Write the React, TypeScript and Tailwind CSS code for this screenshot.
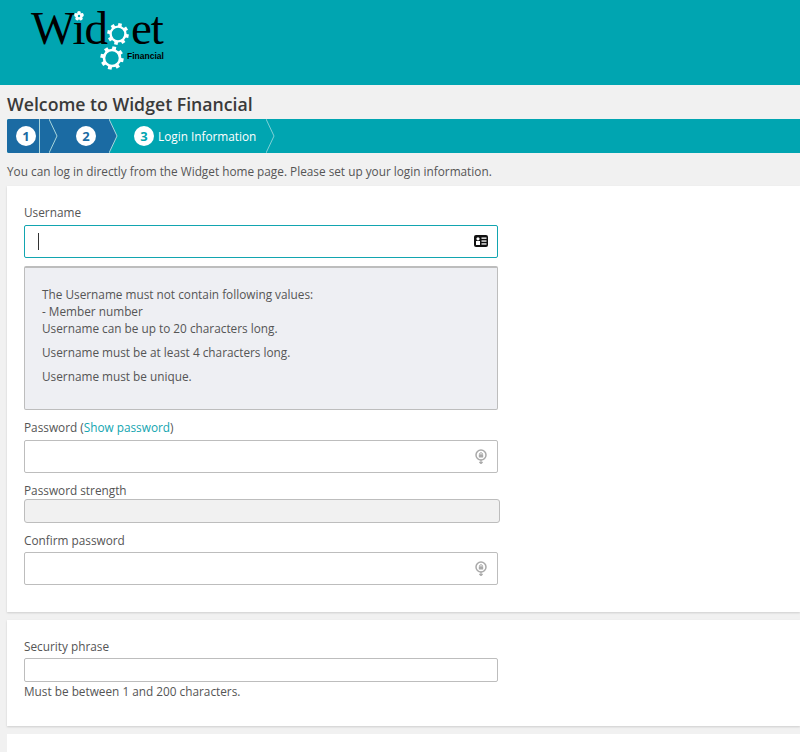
const teal = '#00a5b1'

function Gear({ size, className }: { size: number; className?: string }) {
  const teeth = [0, 45, 90, 135, 180, 225, 270, 315]
  return (
    <svg width={size} height={size} viewBox="0 0 24 24" className={className}>
      <circle cx="12" cy="12" r="7.4" fill="none" stroke="#fff" strokeWidth="2.4" />
      {teeth.map((a) => (
        <rect key={a} x="10.2" y="1.2" width="3.6" height="3.6" fill="#fff" transform={`rotate(${a + 12} 12 12)`} />
      ))}
    </svg>
  )
}

function Flower({ className }: { className?: string }) {
  return (
    <svg width="10" height="10" viewBox="0 0 10 10" className={className}>
      <rect width="10" height="10" fill={teal} />
      {[0, 72, 144, 216, 288].map((a) => (
        <circle key={a} cx="5" cy="2" r="1.9" fill="#fff" transform={`rotate(${a} 5 5)`} />
      ))}
      <circle cx="5" cy="5" r="2.6" fill="#fff" />
      <circle cx="5" cy="5" r="1.2" fill={teal} />
    </svg>
  )
}

function Logo() {
  return (
    <div className="relative w-[136px] h-[72px] ml-[31px] mt-[9px] font-['Liberation_Serif',serif] text-black">
      <div className="absolute left-0 top-[-1px] text-[47px] leading-[40px] tracking-[-1px]">Wid</div>
      <div className="absolute left-[100px] top-[-1px] text-[47px] leading-[40px] tracking-[-1px]">et</div>
      <Flower className="absolute left-[43px] top-[2px]" />
      <Gear size={24} className="absolute left-[75px] top-[13px]" />
      <Gear size={26} className="absolute left-[68px] top-[36px]" />
      <div className="absolute left-[96px] top-[41px] text-[8.5px] leading-[12px] font-bold font-['Liberation_Sans',sans-serif]">
        Financial
      </div>
    </div>
  )
}

function Chevron({ left, right, line = '#a9d6dc' }: { left: string; right: string; line?: string }) {
  return (
    <svg width="9" height="34" viewBox="0 0 9 34" className="shrink-0">
      <rect width="9" height="34" fill={right} />
      <polygon points="0,0 8,17 0,34" fill={left} />
      <polyline points="0,0 8,17 0,34" fill="none" stroke={line} strokeWidth="1" />
    </svg>
  )
}

function StepNumber({ n, color }: { n: number; color: string }) {
  return (
    <span
      className="flex w-[20px] h-[20px] items-center justify-center rounded-full bg-white text-[13px] font-bold shrink-0"
      style={{ color }}
    >
      {n}
    </span>
  )
}

function Steps() {
  const blue = '#1b6ba3'
  return (
    <div className="flex h-[34px] bg-[#00a5b1] text-white text-[11.8px] rounded-l-[2px] overflow-hidden">
      <div className="flex w-[33px] items-center pl-[9px] bg-[#1b6ba3] border-r border-[#a9d6dc]">
        <StepNumber n={1} color={blue} />
      </div>
      <div className="w-[9px] bg-[#1b6ba3]" />
      <Chevron left={blue} right={blue} />
      <div className="flex w-[51px] items-center pl-[18px] bg-[#1b6ba3]">
        <StepNumber n={2} color={blue} />
      </div>
      <Chevron left={blue} right={teal} />
      <div className="flex w-[148px] items-center pl-[16px] gap-[4px] whitespace-nowrap">
        <StepNumber n={3} color={teal} />
        <span>Login Information</span>
      </div>
      <Chevron left={teal} right={teal} line="#7fd0d6" />
    </div>
  )
}

function KeyIcon() {
  return (
    <svg width="12" height="15" viewBox="0 0 12 15" className="absolute right-[10px] top-[8px]">
      <circle cx="6" cy="6" r="5" fill="none" stroke="#aaa" strokeWidth="1.5" />
      <rect x="3.8" y="5.2" width="4.4" height="3.4" rx="0.5" fill="#aaa" />
      <path d="M4.5 5.2 a1.5 1.5 0 0 1 3 0" fill="none" stroke="#aaa" strokeWidth="1" />
      <path d="M6 10.5 v4 M4.4 13 l1.6 1.6 L7.6 13" fill="none" stroke="#aaa" strokeWidth="1.2" />
    </svg>
  )
}

function PasswordInput() {
  return (
    <div className="relative w-[474px] h-[33px] bg-white border border-[#bdbdbd] rounded-[2px]">
      <KeyIcon />
    </div>
  )
}

export default function App() {
  return (
    <div className="h-[752px] overflow-hidden bg-[#f1f1f1] font-['Open_Sans',sans-serif] text-[11.8px] leading-[17px] text-[#555]">
      <header className="h-[85px] bg-[#00a5b1] overflow-hidden">
        <Logo />
      </header>

      <div className="pl-[7px]">
        <h1 className="h-[34px] pt-[7px] text-[17.7px] leading-[24px] font-semibold text-[#3a3a3a]">
          Welcome to Widget Financial
        </h1>
        <Steps />
        <p className="h-[33px] pt-[10px] text-[#555]">
          You can log in directly from the Widget home page. Please set up your login information.
        </p>

        <section className="h-[426px] bg-white pl-[17px] pt-[18px] shadow-[0_1px_2px_rgba(0,0,0,0.15)]">
          <label className="block h-[21px]">Username</label>
          <div className="relative w-[474px] h-[33px] bg-white border border-[#12a5b0] rounded-[2px]">
            <div className="absolute left-[13px] top-[7px] w-px h-[17px] bg-[#333]" />
            <svg width="14" height="12" viewBox="0 0 14 12" className="absolute right-[9px] top-[9px]">
              <rect width="14" height="12" rx="2" fill="#111" />
              <rect x="2" y="6" width="4" height="4" fill="#fff" />
              <circle cx="4" cy="3.8" r="1.6" fill="#fff" />
              <rect x="7.5" y="2.5" width="5" height="1.3" fill="#fff" />
              <rect x="7.5" y="5.4" width="5" height="1.3" fill="#fff" />
              <rect x="7.5" y="8.3" width="5" height="1.3" fill="#fff" />
            </svg>
          </div>

          <div className="w-[474px] h-[144px] mt-[8px] mb-[9px] pl-[17px] pt-[18px] bg-[#eeeff3] border border-[#bdbdbd] border-t-2 rounded-[2px]">
            <p>The Username must not contain following values:</p>
            <p>- Member number</p>
            <p>Username can be up to 20 characters long.</p>
            <p className="mt-[7px]">Username must be at least 4 characters long.</p>
            <p className="mt-[7px]">Username must be unique.</p>
          </div>

          <label className="block h-[21px]">
            Password (<span className="text-[#12a5b0]">Show password</span>)
          </label>
          <PasswordInput />
          <label className="block h-[26px] pt-[9px]">Password strength</label>
          <div className="w-[476px] h-[24px] bg-[#f1f1f1] border border-[#bdbdbd] rounded-[3px]" />
          <label className="block h-[29px] pt-[9px]">Confirm password</label>
          <PasswordInput />
        </section>

        <section className="h-[106px] mt-[8px] bg-white pl-[17px] pt-[18px] shadow-[0_1px_2px_rgba(0,0,0,0.15)]">
          <label className="block h-[20px]">Security phrase</label>
          <div className="w-[474px] h-[24px] bg-white border border-[#bdbdbd] rounded-[2px]" />
          <p className="mt-[1px]">Must be between 1 and 200 characters.</p>
        </section>

        <section className="h-[40px] mt-[8px] bg-white" />
      </div>
    </div>
  )
}
